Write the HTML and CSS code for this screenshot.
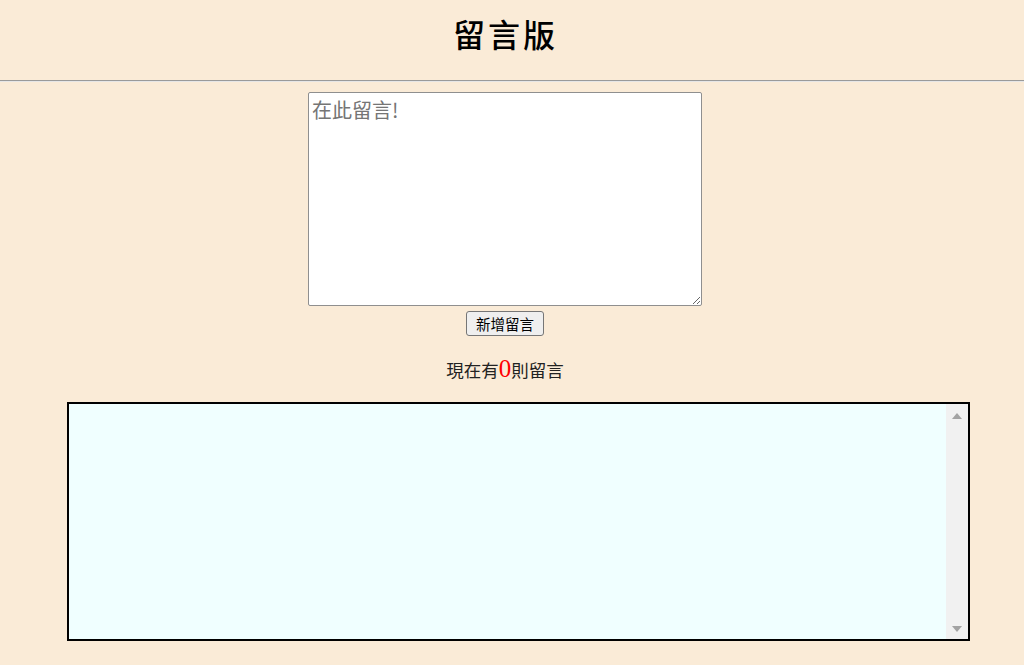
FILE: index.html
```html
<!DOCTYPE html>
<html>
<head>
<meta charset="utf-8">
<link rel="stylesheet" href="styles.css">
</head>
<body>
<header class="header">
  <h1 class="title">留言版</h1>
</header>
<hr class="divider">
<main class="main">
  <textarea class="input" placeholder="在此留言!"></textarea>
  <button class="add-btn">新增留言</button>
  <p class="count">現在有<span class="num">0</span>則留言</p>
  <div class="board">
    <div class="board-content"></div>
    <div class="scrollbar">
      <span class="arrow arrow-up"></span>
      <span class="arrow arrow-down"></span>
    </div>
  </div>
</main>
</body>
</html>
```
FILE: styles.css
```css
html, body {
  margin: 0;
  padding: 0;
  background: #faebd7;
  font-family: "Noto Sans CJK TC", "Noto Sans", sans-serif;
}
.header {
  height: 80px;
  box-sizing: border-box;
  padding: 10px 13px 0 0;
  display: flex;
  justify-content: center;
}
.title {
  margin: 0;
  font-size: 32px;
  line-height: 46px;
  font-weight: 500;
  letter-spacing: 3px;
  color: #000;
}
.divider {
  margin: 0;
  border: none;
  border-top: 1px solid #9a9a9a;
  border-bottom: 1px solid #e6e6e6;
}
.main {
  display: flex;
  flex-direction: column;
  align-items: center;
  padding: 10px 14px 0 0;
}
.input {
  box-sizing: border-box;
  width: 394px;
  height: 214px;
  border: 1px solid #8f8f8f;
  border-radius: 2px;
  padding: 2px 3px;
  font-family: "Noto Sans CJK TC", sans-serif;
  font-size: 20px;
  background: #fff;
  margin: 0;
}
.input::placeholder {
  color: #757575;
}
.add-btn {
  box-sizing: border-box;
  width: 78px;
  height: 25px;
  margin-top: 5px;
  font-family: "Noto Sans CJK TC", sans-serif;
  font-size: 14.5px;
  padding: 0;
  border: 1px solid #767676;
  border-radius: 3px;
  background: #efefef;
  color: #000;
}
.count {
  margin: 18px 0 0;
  font-size: 17.5px;
  line-height: 30px;
  color: #222;
}
.num {
  color: #ff0000;
  font-family: "Liberation Serif", "Times New Roman", serif;
  font-size: 25px;
}
.board {
  box-sizing: border-box;
  align-self: flex-start;
  margin: 17px 0 0 67px;
  width: 903px;
  height: 239px;
  border: 2px solid #000;
  background: #f0ffff;
  display: flex;
}
.board-content {
  flex: 1;
}
.scrollbar {
  width: 22px;
  background: #f1f1f1;
  display: flex;
  flex-direction: column;
  justify-content: space-between;
  align-items: center;
  padding: 9px 0 7px;
}
.arrow {
  width: 0;
  height: 0;
  border-left: 5px solid transparent;
  border-right: 5px solid transparent;
}
.arrow-up {
  border-bottom: 6px solid #a3a3a3;
}
.arrow-down {
  border-top: 6px solid #a3a3a3;
}
```
